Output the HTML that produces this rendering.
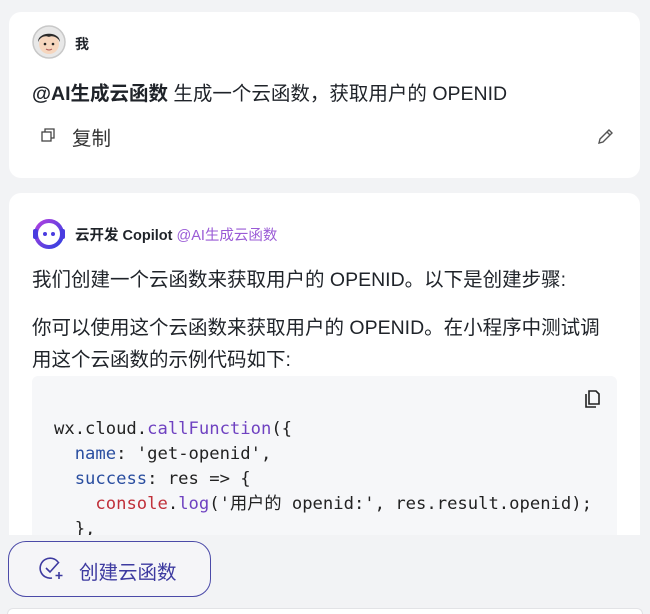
<!DOCTYPE html>
<html><head><meta charset="utf-8"><style>
*{margin:0;padding:0;box-sizing:border-box}
html,body{width:650px;height:614px;overflow:hidden}
body{background:#f2f3f5;font-family:"Liberation Sans","Noto Sans CJK SC",sans-serif;color:#1f2329;position:relative}
.card{position:absolute;left:9px;width:631px;background:#fff;border-radius:12px}
.mono{font-family:"DejaVu Sans Mono","Liberation Mono","Noto Sans CJK SC",monospace}
</style></head><body>
<div class="card" style="top:12px;height:166px">
  <svg style="position:absolute;left:23px;top:13px" width="34" height="34" viewBox="0 0 34 34">
    <circle cx="17" cy="17" r="16" fill="#e8e8e8" stroke="#c8c8c8" stroke-width="1.5"/>
    <circle cx="17" cy="19" r="10" fill="#f6d6be"/>
    <path d="M6 17 C6 6 28 6 28 17 C26 12 20 10 17 12 C13 10 8 12 6 17Z" fill="#2b2b2b"/>
    <circle cx="13" cy="19" r="1.3" fill="#222"/><circle cx="21" cy="19" r="1.3" fill="#222"/>
    <path d="M14 24 Q17 26 20 24" stroke="#a55" fill="none" stroke-width="1"/>
  </svg>
  <div style="position:absolute;left:66px;top:22px;font-size:14px;font-weight:bold">我</div>
  <div style="position:absolute;left:23px;top:65px;font-size:19.5px"><b>@AI生成云函数</b> 生成一个云函数，获取用户的 OPENID</div>
  <svg style="position:absolute;left:32px;top:116px" width="14" height="14" viewBox="0 0 14 14" fill="none" stroke="#444" stroke-width="1.3"><rect x="1" y="4" width="9" height="9"/><path d="M4 4V1h9v9h-3"/></svg>
  <div style="position:absolute;left:63px;top:110px;font-size:19.5px;color:#333">复制</div>
  <svg style="position:absolute;left:587px;top:114px" width="20" height="20" viewBox="0 0 20 20" fill="none" stroke="#555" stroke-width="1.4"><path d="M3 17l1-4L13 4l3 3-9 9z M11 6l3 3"/></svg>
</div>
<div class="card" style="top:193px;height:360px">
  <svg style="position:absolute;left:23px;top:24px" width="34" height="34" viewBox="0 0 34 34"><defs><linearGradient id="g" x1="0" y1="0" x2="1" y2="1"><stop offset="0" stop-color="#b040e0"/><stop offset="1" stop-color="#3040e0"/></linearGradient></defs><circle cx="17" cy="17" r="13" fill="none" stroke="url(#g)" stroke-width="4"/><rect x="1" y="12" width="5" height="10" rx="2" fill="#4a3ce0"/><rect x="28" y="12" width="5" height="10" rx="2" fill="#4a3ce0"/><circle cx="13" cy="17" r="2" fill="#4a3ce0"/><circle cx="21" cy="17" r="2" fill="#4a3ce0"/></svg>
  <div style="position:absolute;left:66px;top:31px;font-size:14.5px"><b>云开发 Copilot</b> <span style="color:#9a5bd6">@AI生成云函数</span></div>
  <div style="position:absolute;left:23px;top:72px;font-size:19.5px;line-height:30px">我们创建一个云函数来获取用户的 OPENID。以下是创建步骤:</div>
  <div style="position:absolute;left:23px;top:119px;width:610px;font-size:19.5px;line-height:32px;white-space:nowrap">你可以使用这个云函数来获取用户的 OPENID。在小程序中测试调<br>用这个云函数的示例代码如下:</div>
  <div style="position:absolute;left:23px;top:183px;width:585px;height:170px;background:#f6f7f9;border-radius:6px">
    <svg style="position:absolute;left:553px;top:14px" width="16" height="18" viewBox="0 0 16 18" fill="none" stroke="#222" stroke-width="1.6"><path d="M1 4v13h10"/><path d="M4 1h7l3 3v10H4z"/></svg>
    <div class="mono" style="position:absolute;left:22px;top:41px;font-size:17.2px;line-height:25px;white-space:pre;color:#222">wx.cloud.<span style="color:#6f42c1">callFunction</span>({
  <span style="color:#2a4ea0">name</span>: 'get-openid',
  <span style="color:#2a4ea0">success</span>: res =&gt; {
    <span style="color:#c0303a">console</span>.<span style="color:#6f42c1">log</span>('用户的 openid:', res.result.openid);
  },</div>
  </div>
</div>
<div style="position:absolute;left:0;top:535px;width:650px;height:79px;background:#f2f3f5"></div>
<div style="position:absolute;left:8px;top:541px;width:203px;height:56px;border:1px solid #4b4aa8;border-radius:18px;background:#f5f5f8"></div>
<svg style="position:absolute;left:38px;top:556px" width="28" height="26" viewBox="0 0 28 26" fill="none" stroke="#3d3aa0" stroke-width="1.6"><path d="M20 6A10 10 0 1 0 14 22"/><path d="M8 12l4 4 9-10"/><path d="M21 16v7M17.5 19.5h7"/></svg>
<div style="position:absolute;left:79px;top:556px;font-size:19.5px;color:#3d3aa0">创建云函数</div>
<div style="position:absolute;left:7px;top:608px;width:636px;height:6px;background:#fff;border:1px solid #e2e3e6;border-bottom:none;border-radius:10px 10px 0 0"></div>
</body></html>
